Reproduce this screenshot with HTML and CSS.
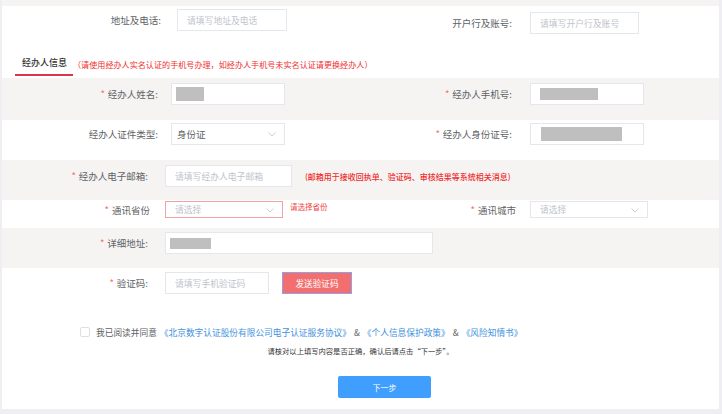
FILE: index.html
```html
<!DOCTYPE html>
<html lang="zh-CN">
<head>
  <meta charset="UTF-8">
  <title>经办人信息</title>
  <link rel="stylesheet" href="styles.css">
</head>
<body>

<div class="panel">
  <div class="band"></div>

  <div class="row row-top">
    <div class="field">
      <span class="label lbl-top">地址及电话:</span>
      <div class="input in-top"><span class="ph">请填写地址及电话</span></div>
    </div>
    <div class="field field-low">
      <span class="label lbl-top-r">开户行及账号:</span>
      <div class="input in-top-r"><span class="ph">请填写开户行及账号</span></div>
    </div>
  </div>

  <div class="section-head">
    <span class="tab">经办人信息</span>
    <span class="head-note">（请使用经办人实名认证的手机号办理，如经办人手机号未实名认证请更换经办人）</span>
  </div>

  <div class="row row-gray row-1">
    <div class="field">
      <span class="label lbl-base"><i class="req">*</i>经办人姓名:</span>
      <div class="input in-base"><span class="mask mask-name"></span></div>
    </div>
    <div class="field">
      <span class="label lbl-base-r"><i class="req">*</i>经办人手机号:</span>
      <div class="input in-base"><span class="mask mask-phone"></span></div>
    </div>
  </div>

  <div class="row row-2">
    <div class="field">
      <span class="label lbl-base">经办人证件类型:</span>
      <div class="input in-base select">
        <span class="val">身份证</span>
        <svg class="arrow" width="8" height="5" viewBox="0 0 8 5"><polyline points="0.5,0.5 4,4 7.5,0.5" fill="none" stroke="#c0c4cc" stroke-width="0.8"/></svg>
      </div>
    </div>
    <div class="field">
      <span class="label lbl-base-r"><i class="req">*</i>经办人身份证号:</span>
      <div class="input in-base"><span class="mask mask-id"></span></div>
    </div>
  </div>

  <div class="row row-gray row-3">
    <div class="field field-wide">
      <span class="label lbl-contact"><i class="req">*</i>经办人电子邮箱:</span>
      <div class="input in-mail"><span class="ph">请填写经办人电子邮箱</span></div>
      <span class="mail-note">(邮箱用于接收回执单、验证码、审核结果等系统相关消息)</span>
    </div>
  </div>

  <div class="row row-4">
    <div class="field">
      <span class="label lbl-plain"><i class="req">*</i>通讯省份</span>
      <div class="input select in-prov">
        <span class="ph">请选择</span>
        <svg class="arrow" width="8" height="5" viewBox="0 0 8 5"><polyline points="0.5,0.5 4,4 7.5,0.5" fill="none" stroke="#c0c4cc" stroke-width="0.8"/></svg>
      </div>
      <span class="err">请选择省份</span>
    </div>
    <div class="field">
      <span class="label lbl-plain-r"><i class="req">*</i>通讯城市</span>
      <div class="input select in-city">
        <span class="ph">请选择</span>
        <svg class="arrow" width="8" height="5" viewBox="0 0 8 5"><polyline points="0.5,0.5 4,4 7.5,0.5" fill="none" stroke="#c0c4cc" stroke-width="0.8"/></svg>
      </div>
    </div>
  </div>

  <div class="row row-gray row-5">
    <div class="field field-wide">
      <span class="label lbl-contact"><i class="req">*</i>详细地址:</span>
      <div class="input in-addr"><span class="mask mask-addr"></span></div>
    </div>
  </div>

  <div class="row row-6">
    <div class="field field-wide">
      <span class="label lbl-contact"><i class="req">*</i>验证码:</span>
      <div class="input in-code"><span class="ph">请填写手机验证码</span></div>
      <button class="btn-code">发送验证码</button>
    </div>
  </div>

  <div class="agree">
    <span class="checkbox"></span>
    <span>我已阅读并同意</span>
    <a class="link">《北京数字认证股份有限公司电子认证服务协议》</a>
    <span class="amp">&amp;</span>
    <a class="link">《个人信息保护政策》</a>
    <span class="amp">&amp;</span>
    <a class="link">《风险知情书》</a>
  </div>

  <p class="hint">请核对以上填写内容是否正确，确认后请点击“下一步”。</p>

  <button class="btn-next">下一步</button>
</div>

</body>
</html>
```

FILE: styles.css
```css
* {
  border: 0;
  padding: 0;
  margin: 0;
  box-sizing: border-box;
}
body {
  background: #eeeef3;
  font-family: "Noto Sans CJK SC", "Noto Sans", sans-serif;
  color: #606266;
}
.panel {
  width: 717px;
  height: 409px;
  margin-left: 2px;
  background: #fff;
  overflow: hidden;
}
.band {
  height: 6px;
  background: #f5f4f3;
}

/* rows */
.row {
  display: flex;
  align-items: flex-start;
}
.row-gray {
  background: #f5f4f3;
}
.row-top { height: 42px; padding-top: 3px; }
.row-1 { height: 42px; padding-top: 5px; }
.row-2 { height: 40px; padding-top: 3px; }
.row-3 { height: 40px; padding-top: 5px; }
.row-4 { height: 28px; padding-top: 1px; }
.row-5 { height: 40px; padding-top: 4px; }
.row-6 { height: 34px; padding-top: 4px; }

.field {
  width: 358.5px;
  display: flex;
  align-items: center;
}
.field-wide {
  width: 100%;
}
.field-low {
  margin-top: 3px;
}

/* labels */
.label {
  flex: none;
  text-align: right;
  font-size: 9.5px;
  line-height: 14px;
  white-space: nowrap;
}
.req {
  font-style: normal;
  color: #f56c6c;
  margin-right: 3px;
}
.lbl-top { width: 159px; margin-right: 16px; }
.lbl-top-r { width: 151.5px; margin-right: 18px; }
.lbl-base { width: 156px; margin-right: 13px; }
.lbl-base-r { width: 151.5px; margin-right: 18px; }
.lbl-contact { width: 146px; margin-right: 17px; }
.lbl-plain { width: 148px; margin-right: 15px; }
.lbl-plain-r { width: 155.5px; margin-right: 14px; }

/* inputs */
.input {
  flex: none;
  height: 22px;
  background: #fff;
  border: 1px solid #e6e7ec;
  display: flex;
  align-items: center;
  padding-left: 9px;
  position: relative;
}
.ph {
  font-size: 8.8px;
  color: #c0c4cc;
  white-space: nowrap;
}
.val {
  font-size: 9.5px;
  color: #606266;
}
.in-top { width: 110px; }
.in-top-r { width: 109px; }
.in-base { width: 114px; padding-left: 4px; }
.select.in-base { padding-left: 5px; }
.in-mail { width: 127px; }
.in-prov { width: 118px; height: 17px; border-color: #f4a2a2; }
.in-city { width: 118px; height: 17px; }
.in-addr { width: 268px; padding-left: 4px; }
.in-code { width: 104px; }

.arrow {
  position: absolute;
  right: 8px;
  top: 50%;
  margin-top: -2px;
}

.mask {
  display: block;
  background: #bfbfbf;
}
.mask-name { width: 28px; height: 14px; }
.mask-phone { width: 58px; height: 12px; margin-left: 5px; }
.mask-id { width: 81px; height: 14px; margin-left: 6px; }
.mask-addr { width: 41px; height: 11px; }

/* notes */
.section-head {
  height: 30px;
  display: flex;
  align-items: flex-end;
}
.tab {
  margin-left: 13px;
  padding: 0 6px 4px 7px;
  border-bottom: 2px solid #e0334d;
  font-size: 9px;
  line-height: 14px;
  color: #333;
  font-weight: 500;
  margin-bottom: 2px;
}
.head-note {
  font-size: 8.1px;
  line-height: 14px;
  color: #f02d2d;
  padding-bottom: 6px;
  white-space: nowrap;
}
.mail-note {
  margin-left: 13px;
  font-size: 8px;
  color: #f02d2d;
  font-weight: 500;
  white-space: nowrap;
}
.err {
  align-self: flex-start;
  margin: 1px 0 0 7px;
  font-size: 7.5px;
  line-height: 10px;
  color: #f04646;
  white-space: nowrap;
}
.btn-code {
  margin-left: 13px;
  width: 70px;
  height: 22px;
  background: #f36f6f;
  border: 1px solid #8ea3e4;
  color: #fff;
  font-family: inherit;
  font-size: 8.6px;
}

/* footer */
.agree {
  display: flex;
  align-items: center;
  height: 14px;
  margin: 23px 0 0 78px;
  font-size: 8.7px;
  white-space: nowrap;
}
.checkbox {
  width: 10px;
  height: 10px;
  border: 1px solid #dcdfe6;
  border-radius: 2px;
  background: #fff;
  margin-right: 6px;
}
.link {
  color: #4091dd;
  margin-left: 3px;
}
.amp {
  margin-left: 3px;
  color: #606266;
}
.hint {
  margin-top: 6px;
  text-align: center;
  font-size: 7.3px;
  line-height: 12px;
  color: #333;
}
.btn-next {
  display: block;
  margin: 19px 0 0 336px;
  width: 93px;
  height: 22px;
  border-radius: 2px;
  background: #409eff;
  color: #fff;
  font-family: inherit;
  font-size: 8px;
}
```
